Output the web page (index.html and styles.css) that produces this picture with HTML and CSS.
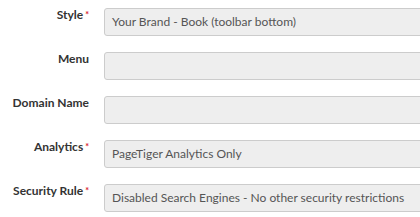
FILE: index.html
```html
<!DOCTYPE html>
<html>
<head>
<meta charset="utf-8">
<link rel="stylesheet" href="styles.css">
</head>
<body>
<form class="form">
  <div class="row">
    <label class="label">Style<span class="req">*</span></label>
    <div class="field">Your Brand - Book (toolbar bottom)</div>
  </div>
  <div class="row">
    <label class="label">Menu</label>
    <div class="field"></div>
  </div>
  <div class="row">
    <label class="label">Domain Name</label>
    <div class="field"></div>
  </div>
  <div class="row">
    <label class="label">Analytics<span class="req">*</span></label>
    <div class="field">PageTiger Analytics Only</div>
  </div>
  <div class="row">
    <label class="label">Security Rule<span class="req">*</span></label>
    <div class="field">Disabled Search Engines - No other security restrictions</div>
  </div>
</form>
</body>
</html>
```

FILE: styles.css
```css
html, body {
  margin: 0;
  padding: 0;
  background: #fff;
  overflow: hidden;
}
.form {
  display: flex;
  flex-direction: column;
  gap: 16px;
  padding-top: 8px;
  font-family: Lato, "Open Sans", sans-serif;
  font-size: 12px;
}
.row {
  display: flex;
  align-items: flex-start;
  height: 28px;
}
.label {
  width: 89px;
  flex: none;
  text-align: right;
  font-weight: bold;
  color: #333;
  line-height: 14px;
  white-space: nowrap;
}
.req {
  display: inline-block;
  vertical-align: top;
  margin-left: 2px;
  color: #d9232d;
  font-size: 9px;
  line-height: 9px;
  margin-top: 2px;
  font-weight: bold;
}
.field {
  margin-left: 15px;
  flex: none;
  width: 360px;
  height: 28px;
  box-sizing: border-box;
  background: #eee;
  border: 1px solid #ccc;
  border-radius: 3px;
  color: #555;
  padding: 0 7px;
  line-height: 26px;
  white-space: nowrap;
}
```
